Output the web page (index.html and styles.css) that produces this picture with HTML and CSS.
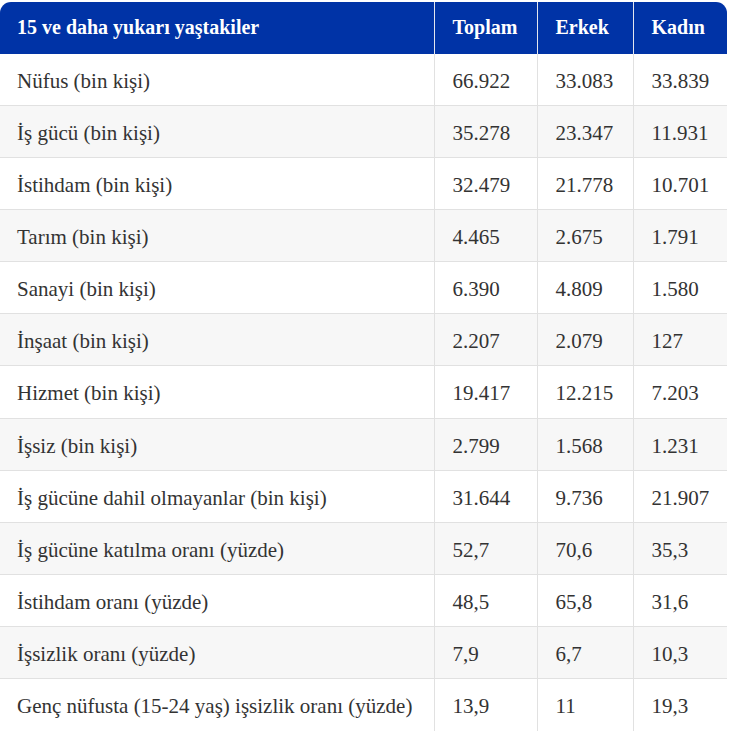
FILE: index.html
```html
<!DOCTYPE html>
<html lang="tr">
<head>
<meta charset="utf-8">
<title>İşgücü istatistikleri</title>
<link rel="stylesheet" href="styles.css">
</head>
<body>
<div class="table-wrap">
  <table class="stats">
    <colgroup>
      <col class="c-label">
      <col class="c-total">
      <col class="c-male">
      <col class="c-female">
    </colgroup>
    <thead>
      <tr>
        <th>15 ve daha yukarı yaştakiler</th>
        <th>Toplam</th>
        <th>Erkek</th>
        <th>Kadın</th>
      </tr>
    </thead>
    <tbody>
      <tr><td>Nüfus (bin kişi)</td><td>66.922</td><td>33.083</td><td>33.839</td></tr>
      <tr><td>İş gücü (bin kişi)</td><td>35.278</td><td>23.347</td><td>11.931</td></tr>
      <tr><td>İstihdam (bin kişi)</td><td>32.479</td><td>21.778</td><td>10.701</td></tr>
      <tr><td>Tarım (bin kişi)</td><td>4.465</td><td>2.675</td><td>1.791</td></tr>
      <tr><td>Sanayi (bin kişi)</td><td>6.390</td><td>4.809</td><td>1.580</td></tr>
      <tr><td>İnşaat (bin kişi)</td><td>2.207</td><td>2.079</td><td>127</td></tr>
      <tr><td>Hizmet (bin kişi)</td><td>19.417</td><td>12.215</td><td>7.203</td></tr>
      <tr><td>İşsiz (bin kişi)</td><td>2.799</td><td>1.568</td><td>1.231</td></tr>
      <tr><td>İş gücüne dahil olmayanlar (bin kişi)</td><td>31.644</td><td>9.736</td><td>21.907</td></tr>
      <tr><td>İş gücüne katılma oranı (yüzde)</td><td>52,7</td><td>70,6</td><td>35,3</td></tr>
      <tr><td>İstihdam oranı (yüzde)</td><td>48,5</td><td>65,8</td><td>31,6</td></tr>
      <tr><td>İşsizlik oranı (yüzde)</td><td>7,9</td><td>6,7</td><td>10,3</td></tr>
      <tr><td>Genç nüfusta (15-24 yaş) işsizlik oranı (yüzde)</td><td>13,9</td><td>11</td><td>19,3</td></tr>
    </tbody>
  </table>
</div>
</body>
</html>
```

FILE: styles.css
```css
html, body {
  margin: 0;
  padding: 0;
  background: #ffffff;
}

body {
  font-family: "Liberation Serif", "Times New Roman", serif;
  font-size: 21px;
  color: #333333;
  padding-top: 2px;
}

.table-wrap {
  width: 727px;
  border-radius: 11px 11px 0 0;
  overflow: hidden;
}

.stats {
  width: 727px;
  border-collapse: collapse;
  table-layout: fixed;
  font-family: "Liberation Serif", "Times New Roman", serif;
}

.c-label { width: 434px; }
.c-total { width: 103px; }
.c-male { width: 96px; }
.c-female { width: 94px; }

.stats th {
  background: #0033a6;
  color: #ffffff;
  font-size: 20px;
  font-weight: 700;
  text-align: left;
  line-height: 24px;
  padding: 13.25px 18px 14.25px;
  border-left: 1px solid #e4e6ee;
}

.stats td {
  font-size: 21px;
  text-align: left;
  line-height: 24px;
  padding: 15px 18px 12.17px;
  border-left: 1px solid #e1e1e1;
  border-top: 1px solid #e1e1e1;
  white-space: nowrap;
}

.stats th:first-child,
.stats td:first-child {
  border-left: none;
  padding-left: 17px;
}

.stats tbody tr:first-child td {
  border-top: none;
}

.stats tbody tr:nth-child(even) td {
  background: #f7f7f7;
}
```
